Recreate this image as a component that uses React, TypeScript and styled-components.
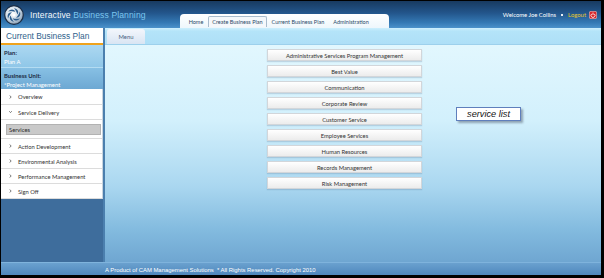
import styled, { createGlobalStyle } from 'styled-components'

const GlobalStyle = createGlobalStyle`
  html, body {
    margin: 0;
    padding: 0;
    background: #000;
  }
  body {
    font-family: Lato, "Liberation Sans", Arial, sans-serif;
  }
`

const Frame = styled.div`
  width: 604px;
  height: 278px;
  box-sizing: border-box;
  padding: 1px 3px 3px 1px;
  background: #000;
  display: flex;
  flex-direction: column;
`

const Header = styled.header`
  height: 27px;
  display: flex;
  align-items: center;
  background: linear-gradient(#183a60 0%, #23568c 45%, #3479b4 80%, #4b92cb 100%);
`

const Logo = styled.svg`
  width: 20px;
  height: 20px;
  margin-left: 3px;
  flex-shrink: 0;
`

const AppTitle = styled.div`
  margin-left: 6px;
  font-family: "Liberation Sans", Arial, sans-serif;
  font-size: 8.6px;
  color: #f2f6fa;
  letter-spacing: 0.1px;
  white-space: nowrap;
`

const TitleAccent = styled.span`
  color: #7cc6ef;
`

const TabBar = styled.nav`
  align-self: flex-end;
  margin-left: 34px;
  width: 209px;
  height: 14px;
  box-sizing: border-box;
  padding: 2px 0 0 5px;
  display: flex;
  align-items: flex-start;
  gap: 1px;
  background: linear-gradient(#ffffff, #eef7fc);
  border-radius: 4px 4px 0 0;
`

const Tab = styled.div<{ $active?: boolean }>`
  height: 11px;
  box-sizing: border-box;
  padding: 0 3px;
  display: flex;
  align-items: center;
  font-size: 5.5px;
  color: #2b4a68;
  white-space: nowrap;
  border: 1px solid ${p => (p.$active ? '#a9bccd' : 'transparent')};
  border-bottom: none;
  border-radius: 2px 2px 0 0;
  background: ${p => (p.$active ? '#f5f8fb' : 'transparent')};
`

const UserArea = styled.div`
  margin-left: auto;
  margin-right: 4px;
  display: flex;
  align-items: center;
  gap: 3px;
  font-size: 5.9px;
  color: #ffffff;
  white-space: nowrap;
`

const Bullet = styled.span`
  width: 2px;
  height: 2px;
  margin: 0 2px;
  background: #e8eef4;
`

const Logout = styled.span`
  color: #e6c72c;
`

const PowerIcon = styled.svg`
  width: 8px;
  height: 8px;
`

const Body = styled.div`
  height: 234px;
  display: flex;
`

const Sidebar = styled.aside`
  width: 102px;
  display: flex;
  flex-direction: column;
  background: #3e6d9c;
`

const SideTitle = styled.div`
  height: 15px;
  display: flex;
  align-items: center;
  padding-left: 5px;
  background: #ffffff;
  border-bottom: 2px solid #f0a31c;
  font-family: "Liberation Sans", Arial, sans-serif;
  font-size: 8.4px;
  color: #2f5f8c;
  white-space: nowrap;
`

const InfoBlock = styled.div<{ $dark?: boolean }>`
  height: 22px;
  box-sizing: border-box;
  padding: 3px 3px 0;
  font-size: 5.9px;
  line-height: 9px;
  background: ${p =>
    p.$dark
      ? 'linear-gradient(#87c0e4, #6da8d3)'
      : 'linear-gradient(#acd8f1, #90c7e8)'};
  border-top: ${p => (p.$dark ? '1px solid #b4dcf2' : 'none')};
`

const InfoLabel = styled.div`
  font-weight: bold;
  color: #1c2c44;
`

const InfoValue = styled.div`
  color: #ffffff;
`

const NavList = styled.div`
  background: #ffffff;
  border-right: 1px solid #c8d4de;
`

const NavRow = styled.div<{ $h: number }>`
  height: ${p => p.$h}px;
  box-sizing: border-box;
  display: flex;
  align-items: center;
  padding-left: 8px;
  gap: 6px;
  border-bottom: 1px solid #dcdcdc;
  font-size: 5.8px;
  color: #333333;
  white-space: nowrap;
`

const Chevron = styled.svg`
  width: 3px;
  height: 4px;
  flex-shrink: 0;
`

const SubArea = styled.div`
  height: 19px;
  box-sizing: border-box;
  padding: 4px 1px 0 5px;
  border-bottom: 1px solid #dcdcdc;
`

const SubItem = styled.div`
  height: 11px;
  box-sizing: border-box;
  padding-left: 2px;
  display: flex;
  align-items: center;
  background: #c9c9c9;
  border: 1px solid #b2b2b2;
  font-size: 5.8px;
  color: #2a2a2a;
`

const Main = styled.main`
  flex: 1;
  display: flex;
  flex-direction: column;
  border-left: 2px solid #4b7fae;
`

const MenuBand = styled.div`
  height: 17px;
  box-sizing: border-box;
  display: flex;
  align-items: flex-end;
  padding-left: 2px;
  background: linear-gradient(#cdeffd 0%, #b4e4f9 20%, #aedff7 100%);
  border-bottom: 1px solid #9dd0ec;
`

const MenuTab = styled.div`
  width: 38px;
  height: 15px;
  display: flex;
  align-items: center;
  justify-content: center;
  background: linear-gradient(#f3f6fc, #d9e5f3);
  border-radius: 3px 3px 0 0;
  font-size: 5.9px;
  color: #4a5f7e;
`

const Content = styled.div`
  flex: 1;
  position: relative;
  display: flex;
  flex-direction: column;
  gap: 4px;
  padding: 4px 0 0 162px;
  background: linear-gradient(#e2f7fe 0%, #d2f0fc 35%, #aad7f0 65%, #83bbdf 85%, #6fa6d1 100%);
`

const ServiceButton = styled.div`
  width: 155px;
  height: 12px;
  box-sizing: border-box;
  display: flex;
  align-items: center;
  justify-content: center;
  background: linear-gradient(#ffffff, #ececec);
  border: 1px solid #d2d6da;
  box-shadow: 0 1px 1px rgba(90, 120, 150, 0.25);
  font-size: 5.8px;
  color: #333333;
  white-space: nowrap;
`

const Callout = styled.div`
  position: absolute;
  left: 351px;
  top: 62px;
  width: 65px;
  height: 14px;
  box-sizing: border-box;
  display: flex;
  align-items: center;
  justify-content: center;
  background: #ffffff;
  border: 1px solid #5f7fbc;
  box-shadow: 2px 2px 2px rgba(60, 70, 90, 0.45);
  font-family: "Liberation Sans", Arial, sans-serif;
  font-style: italic;
  font-size: 9.2px;
  color: #111;
`

const Footer = styled.footer`
  height: 13px;
  box-sizing: border-box;
  display: flex;
  align-items: center;
  padding: 1px 0 0 104px;
  background: linear-gradient(#6aa1cf, #4f87bd);
  border-top: 1px solid #7fb3dc;
  font-family: "Liberation Sans", Arial, sans-serif;
  font-size: 5.9px;
  color: #ffffff;
  white-space: nowrap;
`

const tabs = ['Home', 'Create Business Plan', 'Current Business Plan', 'Administration']

const services = [
  'Administrative Services Program Management',
  'Best Value',
  'Communication',
  'Corporate Review',
  'Customer Service',
  'Employee Services',
  'Human Resources',
  'Records Management',
  'Risk Management',
]

const lowerNav = ['Action Development', 'Environmental Analysis', 'Performance Management', 'Sign Off']

const LogoMark = () => (
  <Logo viewBox="0 0 20 20">
    <defs>
      <radialGradient id="lg" cx="40%" cy="35%" r="70%">
        <stop offset="0%" stopColor="#ffffff" />
        <stop offset="60%" stopColor="#c9d6e2" />
        <stop offset="100%" stopColor="#7d93aa" />
      </radialGradient>
    </defs>
    <circle cx="10" cy="10" r="9.3" fill="url(#lg)" stroke="#1b2c44" strokeWidth="1.2" />
    {[0, 60, 120, 180, 240, 300].map(a => (
      <path
        key={a}
        d="M10 3.2 C13.6 3.8 15.4 6.8 13.4 9.6 C12.9 7.4 11.8 5.4 10 3.2Z"
        fill="#2f5f8f"
        transform={`rotate(${a} 10 10)`}
      />
    ))}
    <circle cx="10" cy="10" r="1.6" fill="#ffffff" />
  </Logo>
)

const Power = () => (
  <PowerIcon viewBox="0 0 8 8">
    <rect x="0.3" y="0.3" width="7.4" height="7.4" rx="1.6" fill="#d8262a" stroke="#f4d0d0" strokeWidth="0.6" />
    <path d="M2.7 2.9 A2 2 0 1 0 5.3 2.9" fill="none" stroke="#fff" strokeWidth="0.8" />
    <path d="M4 1.6 V4" stroke="#fff" strokeWidth="0.8" />
  </PowerIcon>
)

const ChevronIcon = ({ open }: { open?: boolean }) => (
  <Chevron viewBox="0 0 3 4">
    {open ? (
      <path d="M0.2 1.2 L1.5 2.6 L2.8 1.2" fill="none" stroke="#444" strokeWidth="0.7" />
    ) : (
      <path d="M0.6 0.5 L2.2 2 L0.6 3.5" fill="none" stroke="#444" strokeWidth="0.7" />
    )}
  </Chevron>
)

export default function App() {
  return (
    <>
      <GlobalStyle />
      <Frame>
        <Header>
          <LogoMark />
          <AppTitle>
            Interactive <TitleAccent>Business Planning</TitleAccent>
          </AppTitle>
          <TabBar>
            {tabs.map(t => (
              <Tab key={t} $active={t === 'Create Business Plan'}>
                {t}
              </Tab>
            ))}
          </TabBar>
          <UserArea>
            <span>Welcome Joe Collins</span>
            <Bullet />
            <Logout>Logout</Logout>
            <Power />
          </UserArea>
        </Header>
        <Body>
          <Sidebar>
            <SideTitle>Current Business Plan</SideTitle>
            <InfoBlock>
              <InfoLabel>Plan:</InfoLabel>
              <InfoValue>Plan A</InfoValue>
            </InfoBlock>
            <InfoBlock $dark>
              <InfoLabel>Business Unit:</InfoLabel>
              <InfoValue>*Project Management</InfoValue>
            </InfoBlock>
            <NavList>
              <NavRow $h={16}>
                <ChevronIcon />
                Overview
              </NavRow>
              <NavRow $h={15}>
                <ChevronIcon open />
                Service Delivery
              </NavRow>
              <SubArea>
                <SubItem>Services</SubItem>
              </SubArea>
              {lowerNav.map(n => (
                <NavRow key={n} $h={15}>
                  <ChevronIcon />
                  {n}
                </NavRow>
              ))}
            </NavList>
          </Sidebar>
          <Main>
            <MenuBand>
              <MenuTab>Menu</MenuTab>
            </MenuBand>
            <Content>
              {services.map(s => (
                <ServiceButton key={s}>{s}</ServiceButton>
              ))}
              <Callout>service list</Callout>
            </Content>
          </Main>
        </Body>
        <Footer>A Product of CAM Management Solutions&nbsp; * All Rights Reserved. Copyright 2010</Footer>
      </Frame>
    </>
  )
}
